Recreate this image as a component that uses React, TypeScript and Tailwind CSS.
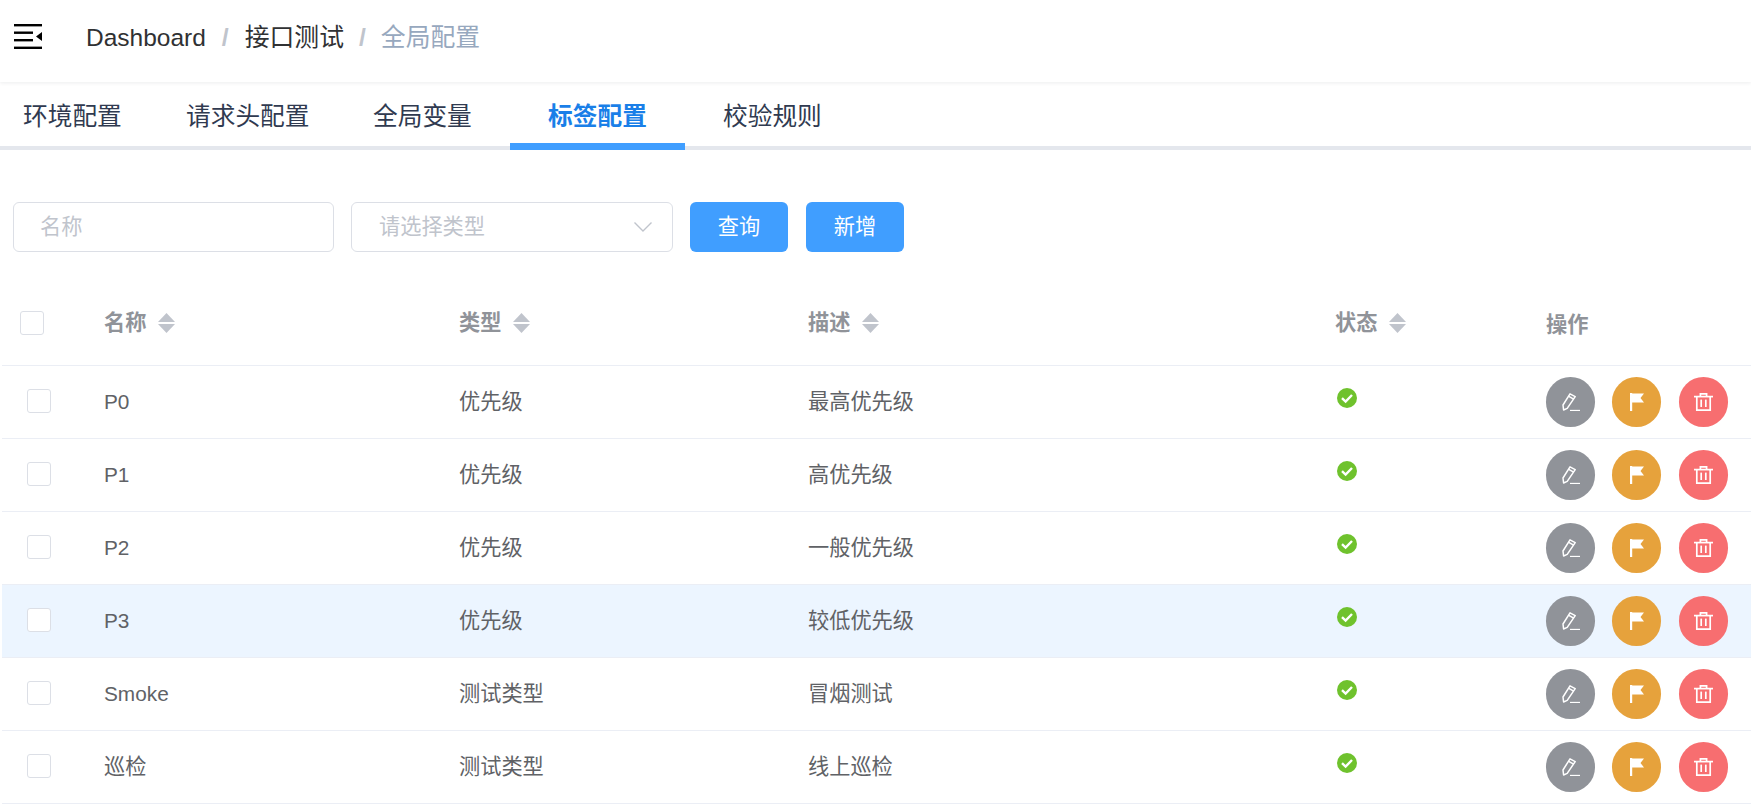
import React from 'react';

const FONT = "font-['Liberation_Sans','Noto_Sans_CJK_SC',sans-serif]";

const rows = [
  { name: 'P0', type: '优先级', desc: '最高优先级' },
  { name: 'P1', type: '优先级', desc: '高优先级' },
  { name: 'P2', type: '优先级', desc: '一般优先级' },
  { name: 'P3', type: '优先级', desc: '较低优先级', hover: true },
  { name: 'Smoke', type: '测试类型', desc: '冒烟测试' },
  { name: '巡检', type: '测试类型', desc: '线上巡检' },
];

function SortCaret() {
  return (
    <svg viewBox="0 0 17 20" className="w-[17px] h-[20px] ml-[12px] shrink-0 fill-[#c0c4cc]">
      <path d="M8.5 0 L17 9 L0 9 Z" />
      <path d="M0 11 L17 11 L8.5 20 Z" />
    </svg>
  );
}

function Checkbox({ className }: { className: string }) {
  return <span className={`block w-[24px] h-[24px] bg-white border border-[#dcdfe6] rounded-[3px] ${className}`} />;
}

function HeaderCell({ label }: { label: string }) {
  return (
    <div className="flex items-center -mt-[12px]">
      <span>{label}</span>
      <SortCaret />
    </div>
  );
}

function EditIcon() {
  return (
    <svg viewBox="0 0 18 18" className="w-[18px] h-[18px]" fill="none" stroke="white" strokeWidth="1.5">
      <path d="M8 0.8 L13.2 3.6 L5.2 15.4 L1.6 17 L1 12 Z" strokeLinejoin="round" />
      <path d="M6.4 3.2 L11.6 6.2" />
      <path d="M8 17.6 H18" />
    </svg>
  );
}

function FlagIcon() {
  return (
    <svg viewBox="0 0 14 18" className="w-[14px] h-[18px] fill-white">
      <rect x="0" y="0" width="2.2" height="18" />
      <path d="M2 0.5 H14 L10.5 5 L14 9.5 H2 Z" />
    </svg>
  );
}

function TrashIcon() {
  return (
    <svg viewBox="0 0 19 18" className="w-[19px] h-[18px]" fill="none" stroke="white" strokeWidth="1.7">
      <path d="M0 3.6 H19" />
      <path d="M6.4 3.6 V0.9 H12.6 V3.6" />
      <path d="M2.8 3.6 V17.2 H16.2 V3.6" />
      <path d="M7.2 6.6 V14" />
      <path d="M11.8 6.6 V14" />
    </svg>
  );
}

function RoundButton({ color, children }: { color: string; children: React.ReactNode }) {
  return (
    <span className={`w-[49px] h-[50px] rounded-full flex items-center justify-center ${color}`}>
      {children}
    </span>
  );
}

export default function App() {
  return (
    <div className={`h-[806px] overflow-hidden bg-white ${FONT}`}>
      {/* Navbar */}
      <div className="h-[82px] flex items-center shadow-[0_1px_4px_rgba(0,21,41,0.08)] pl-[14px] relative">
        <svg viewBox="0 0 28 25" className="w-[28px] h-[25px] -mt-[10px] fill-black">
          <rect x="0" y="0" width="28" height="2.4" />
          <rect x="0" y="7.5" width="19" height="2.4" />
          <rect x="0" y="15" width="19" height="2.4" />
          <rect x="0" y="22.6" width="28" height="2.4" />
          <path d="M28 8 V17 L22 12.5 Z" />
        </svg>
        <div className="flex items-center ml-[44px] text-[24.8px] -mt-[6px] text-[#303133]">
          <span className="text-[24.5px]">Dashboard</span>
          <span className="mx-[16px] text-[#c0c4cc] font-bold">/</span>
          <span>接口测试</span>
          <span className="mx-[15px] text-[#c0c4cc] font-bold">/</span>
          <span className="text-[#97a8be]">全局配置</span>
        </div>
      </div>

      {/* Tabs */}
      <div className="h-[68px] border-b-[4px] border-[#e4e7ed] flex items-stretch text-[24.7px] text-[#303a50]">
        <div className="ml-[23px] w-[163px] pt-[16px]">环境配置</div>
        <div className="w-[187px] pt-[16px]">请求头配置</div>
        <div className="w-[137px] pt-[16px]">全局变量</div>
        <div className="w-[175px] h-[68px] pt-[16px] text-center font-bold text-[#1a7fe8] border-b-[7px] border-[#409eff]">标签配置</div>
        <div className="ml-[38px] pt-[16px]">校验规则</div>
      </div>

      {/* Filters */}
      <div className="flex items-center mt-[52px] ml-[13px] text-[21.2px]">
        <div className="w-[321px] h-[50px] border border-[#dcdfe6] rounded-[6px] flex items-center pl-[26px] text-[#c0c4cc]">名称</div>
        <div className="w-[322px] h-[50px] ml-[17px] border border-[#dcdfe6] rounded-[6px] flex items-center justify-between pl-[27px] pr-[20px] text-[#c0c4cc]">
          <span>请选择类型</span>
          <svg viewBox="0 0 18 10" className="w-[18px] h-[10px]" fill="none" stroke="#c0c4cc" strokeWidth="1.4">
            <path d="M0.5 0.5 L9 9 L17.5 0.5" />
          </svg>
        </div>
        <button className="w-[98px] h-[50px] ml-[17px] bg-[#409eff] text-white rounded-[6px]">查询</button>
        <button className="w-[98px] h-[50px] ml-[18px] bg-[#409eff] text-white rounded-[6px]">新增</button>
      </div>

      {/* Table */}
      <div className="ml-[2px] mt-[41px] text-[21.2px]">
        <div className="h-[73px] grid grid-cols-[102px_355px_349px_527px_211px_1fr] items-center border-b border-[#ebeef5] font-bold text-[#909399]">
          <Checkbox className="ml-[18px] -mt-[12px]" />
          <HeaderCell label="名称" />
          <HeaderCell label="类型" />
          <HeaderCell label="描述" />
          <HeaderCell label="状态" />
          <span className="-mt-[8px]">操作</span>
        </div>
        {rows.map((row) => (
          <div
            key={row.name}
            className={`h-[73px] grid grid-cols-[102px_355px_349px_527px_211px_1fr] items-center border-b border-[#ebeef5] text-[#606266] ${row.hover ? 'bg-[#ecf5ff]' : ''}`}
          >
            <Checkbox className="ml-[25px] -mt-[3px]" />
            <span className={row.name === '巡检' ? '' : 'text-[20.8px]'}>{row.name}</span>
            <span>{row.type}</span>
            <span>{row.desc}</span>
            <svg viewBox="0 0 20 20" className="w-[20px] h-[20px] ml-[2px] -mt-[8px]">
              <circle cx="10" cy="10" r="10" fill="#6fc22d" />
              <path d="M5 10.2 L8.6 13.6 L15 7" fill="none" stroke="white" strokeWidth="2.4" />
            </svg>
            <div className="flex">
              <RoundButton color="bg-[#909399]"><EditIcon /></RoundButton>
              <span className="w-[17px]" />
              <RoundButton color="bg-[#e6a23c]"><FlagIcon /></RoundButton>
              <span className="w-[18px]" />
              <RoundButton color="bg-[#f76e70]"><TrashIcon /></RoundButton>
            </div>
          </div>
        ))}
      </div>
    </div>
  );
}
